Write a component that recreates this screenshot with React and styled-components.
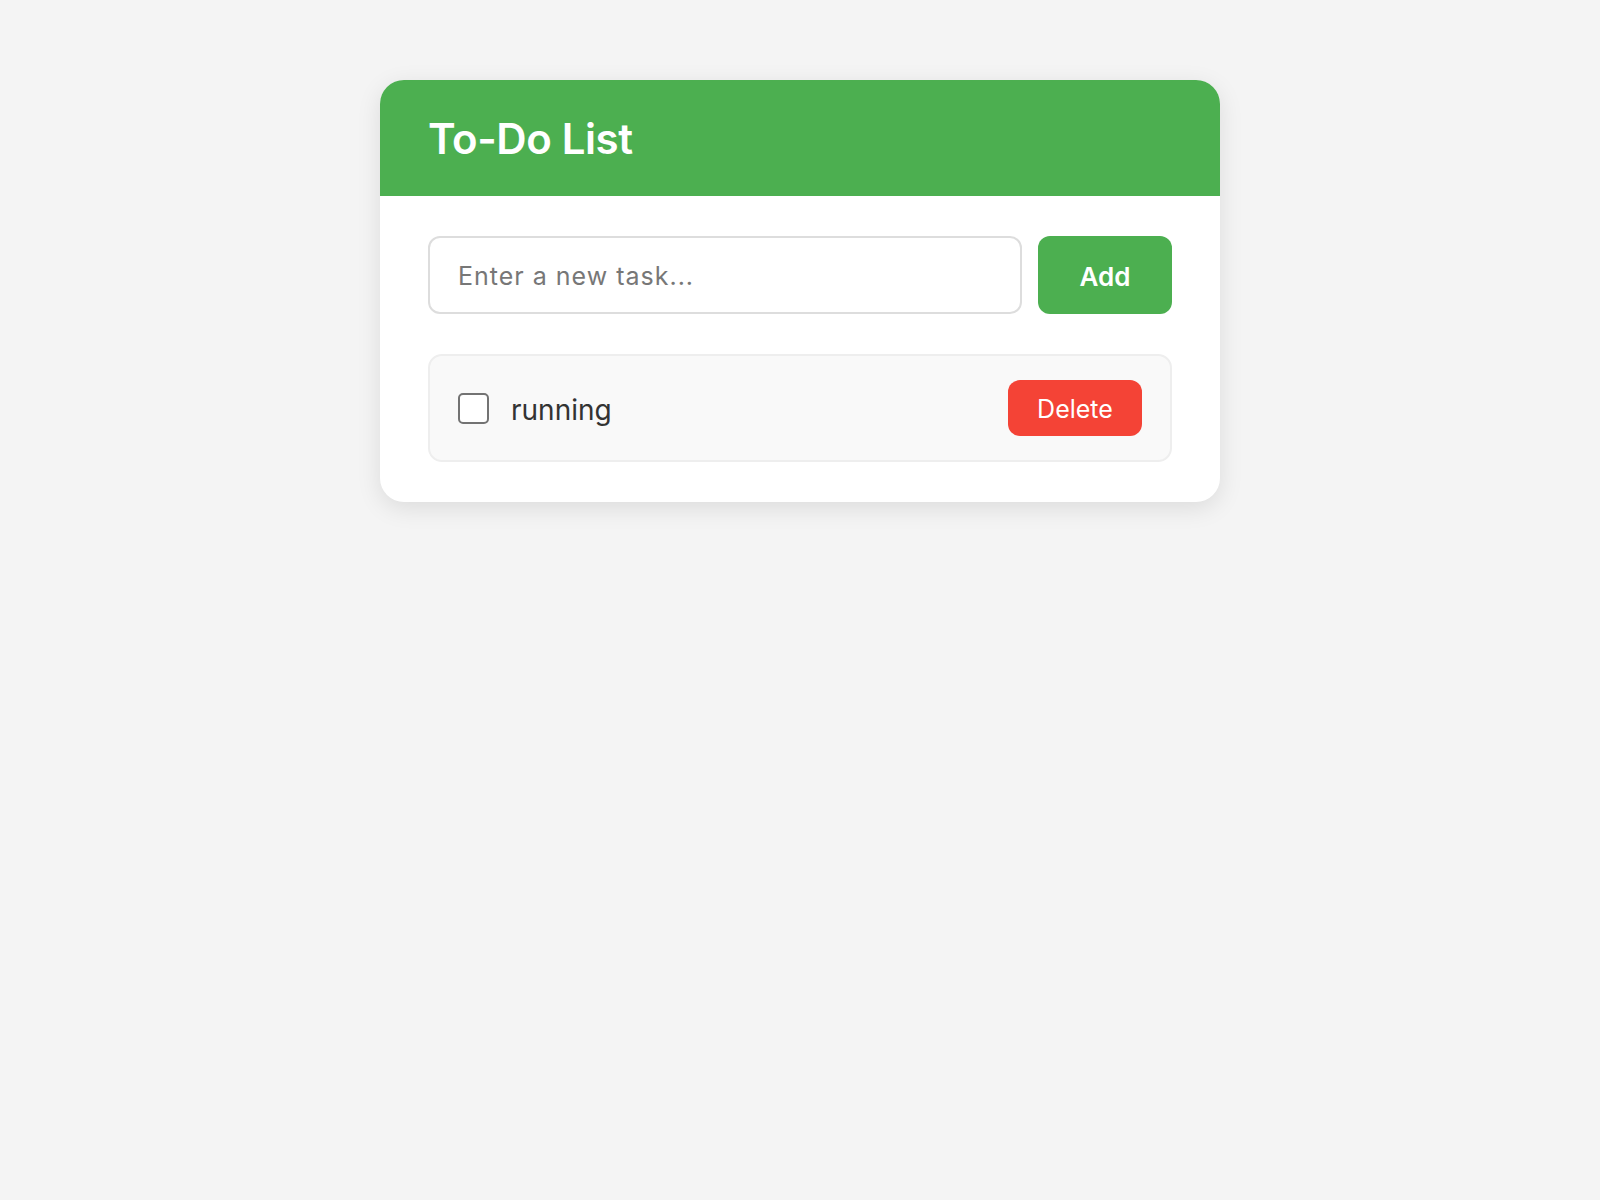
import React, { useState } from "react";
import styled, { createGlobalStyle } from "styled-components";

const Global = createGlobalStyle`
  html, body { margin: 0; padding: 0; background: #f4f4f4; }
  body { font-family: Inter, "Noto Sans", "Liberation Sans", sans-serif; }
  * { box-sizing: border-box; }
`;

const Page = styled.div`
  min-height: 1200px;
  display: flex;
  justify-content: center;
  align-items: flex-start;
  padding-top: 80px;
`;

const Card = styled.div`
  width: 840px;
  background: #ffffff;
  border-radius: 24px;
  box-shadow: 0 6px 24px rgba(0, 0, 0, 0.1);
  overflow: hidden;
`;

const Header = styled.div`
  background: #4caf50;
  height: 116px;
  display: flex;
  align-items: center;
  padding: 3px 48px 0;
`;

const Title = styled.h1`
  margin: 0;
  color: #ffffff;
  font-size: 42px;
  font-weight: 600;
  letter-spacing: -0.4px;
  line-height: 1.2;
`;

const Body = styled.div`
  padding: 40px 48px 40px;
  display: flex;
  flex-direction: column;
  gap: 40px;
`;

const InputRow = styled.form`
  display: flex;
  gap: 16px;
`;

const TaskInput = styled.input`
  flex: 1;
  height: 78px;
  border: 2px solid #dddddd;
  border-radius: 12px;
  padding: 2px 28px 0;
  font-family: inherit;
  font-size: 25px;
  letter-spacing: 1px;
  color: #333;
  outline: none;
  &::placeholder { color: #777777; }
`;

const Button = styled.button`
  border: none;
  border-radius: 12px;
  color: #ffffff;
  font-family: inherit;
  cursor: pointer;
  background: ${(p) => (p.$variant === "danger" ? "#f44336" : "#4caf50")};
  font-size: ${(p) => (p.$variant === "danger" ? "25px" : "26px")};
  font-weight: ${(p) => (p.$variant === "danger" ? 400 : 600)};
  height: ${(p) => (p.$variant === "danger" ? "56px" : "78px")};
  width: 134px;
  padding: 2px 0 0;
`;

const List = styled.ul`
  list-style: none;
  margin: 0;
  padding: 0;
  display: flex;
  flex-direction: column;
  gap: 12px;
`;

const Item = styled.li`
  display: flex;
  align-items: center;
  background: #f9f9f9;
  border: 2px solid #eeeeee;
  border-radius: 14px;
  padding: 24px 28px;
`;

const Check = styled.input`
  appearance: none;
  width: 31px;
  height: 31px;
  margin: 0 22px 0 0;
  border: 2px solid #737373;
  border-radius: 5px;
  background: #ffffff;
  flex-shrink: 0;
`;

const Label = styled.span`
  flex: 1;
  font-size: 28px;
  color: #333333;
  padding-top: 3px;
`;

export default function App() {
  const [tasks] = useState([{ id: 1, text: "running" }]);
  return (
    <>
      <Global />
      <Page>
        <Card>
          <Header>
            <Title>To-Do List</Title>
          </Header>
          <Body>
            <InputRow onSubmit={(e) => e.preventDefault()}>
              <TaskInput placeholder="Enter a new task..." />
              <Button type="submit">Add</Button>
            </InputRow>
            <List>
              {tasks.map((t) => (
                <Item key={t.id}>
                  <Check type="checkbox" />
                  <Label>{t.text}</Label>
                  <Button $variant="danger">Delete</Button>
                </Item>
              ))}
            </List>
          </Body>
        </Card>
      </Page>
    </>
  );
}
